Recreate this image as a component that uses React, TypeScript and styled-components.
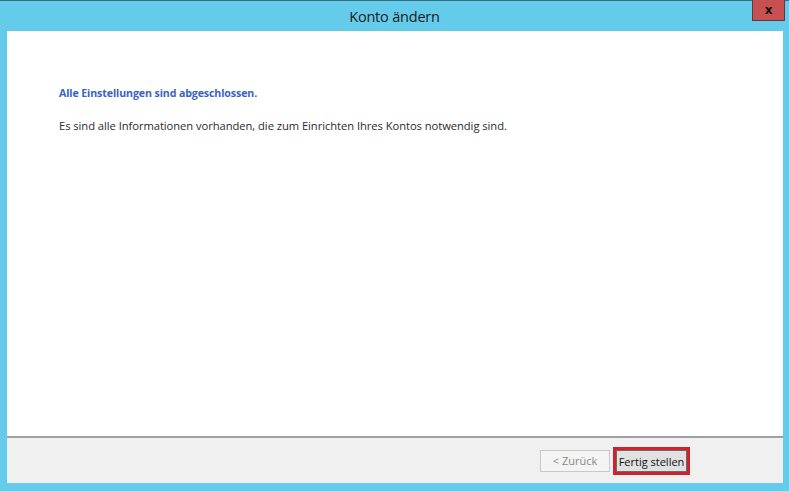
import styled, { createGlobalStyle } from "styled-components";

const GlobalStyle = createGlobalStyle`
  html, body {
    margin: 0;
    padding: 0;
    background: #65cbea;
  }
`;

const Window = styled.div`
  width: 789px;
  height: 491px;
  box-sizing: border-box;
  background: #65cbea;
  border-top: 1px solid #3b6f80;
  display: flex;
  flex-direction: column;
  font-family: "Open Sans", "Noto Sans", sans-serif;
`;

const TitleBar = styled.div`
  height: 30px;
  flex: none;
  position: relative;
  display: flex;
  align-items: center;
  justify-content: center;
`;

const Title = styled.span`
  font-size: 14.5px;
  color: #1b1b1b;
  letter-spacing: -0.2px;
`;

const CloseButton = styled.button`
  position: absolute;
  top: -1px;
  right: 4px;
  width: 33px;
  height: 21px;
  box-sizing: border-box;
  background: #c75050;
  border: 1px solid #5a3c3c;
  border-top: none;
  color: #111;
  font-family: "DejaVu Sans", sans-serif;
  font-weight: bold;
  font-size: 12px;
  display: flex;
  align-items: center;
  justify-content: center;
  padding: 0 0 1px;
`;

const Panel = styled.div`
  flex: 1;
  margin: 0 6px 8px 7px;
  display: flex;
  flex-direction: column;
  background: #fff;
`;

const Content = styled.div`
  flex: 1;
  padding: 55px 0 0 52px;
`;

const Heading = styled.div`
  color: #3a62c4;
  font-weight: 700;
  font-size: 10.6px;
  letter-spacing: -0.1px;
`;

const Message = styled.div`
  margin-top: 18px;
  color: #2b2b2b;
  font-size: 11.2px;
  letter-spacing: -0.05px;
`;

const Footer = styled.div`
  height: 45px;
  flex: none;
  background: #f0f0f0;
  border-top: 2px solid #a0a0a0;
  display: flex;
  align-items: center;
  justify-content: flex-end;
  padding-right: 93px;
  gap: 3px;
`;

const Button = styled.button<{ $highlight?: boolean; $disabled?: boolean }>`
  height: ${(p) => (p.$highlight ? "28px" : "22px")};
  width: ${(p) => (p.$highlight ? "77px" : "70px")};
  box-sizing: border-box;
  background: ${(p) => (p.$disabled ? "#f4f4f4" : "#e1e1e1")};
  border: ${(p) =>
    p.$highlight ? "3px solid #d0222c" : "1px solid #c8c8c8"};
  box-shadow: ${(p) => (p.$highlight ? "inset 0 0 0 1px #6a6a6a" : "none")};
  color: ${(p) => (p.$disabled ? "#8a8a8a" : "#111")};
  font-family: "Open Sans", "Noto Sans", sans-serif;
  font-size: 11px;
  padding: 0 2px;
  white-space: nowrap;
  display: flex;
  align-items: center;
  justify-content: center;
  margin-top: ${(p) => (p.$highlight ? "1px" : "0")};
`;

export default function App() {
  return (
    <>
      <GlobalStyle />
      <Window>
        <TitleBar>
          <Title>Konto ändern</Title>
          <CloseButton>x</CloseButton>
        </TitleBar>
        <Panel>
          <Content>
            <Heading>Alle Einstellungen sind abgeschlossen.</Heading>
            <Message>
              Es sind alle Informationen vorhanden, die zum Einrichten Ihres Kontos notwendig sind.
            </Message>
          </Content>
          <Footer>
            <Button $disabled>&lt; Zurück</Button>
            <Button $highlight>Fertig stellen</Button>
          </Footer>
        </Panel>
      </Window>
    </>
  );
}
